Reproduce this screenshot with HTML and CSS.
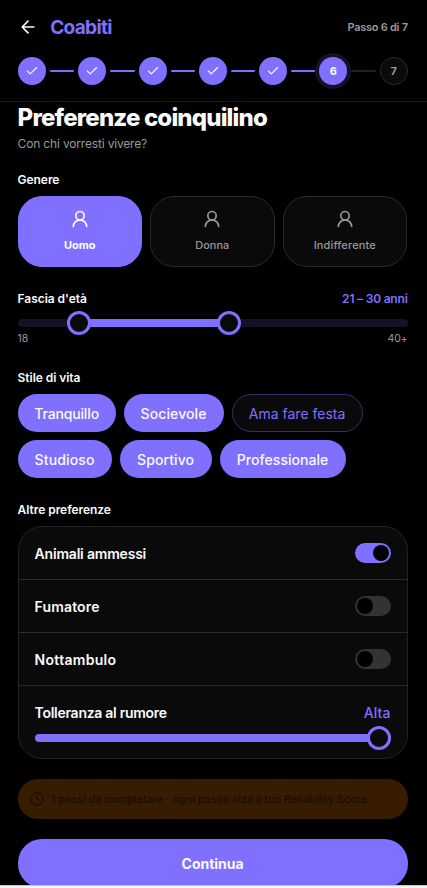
FILE: index.html
```html
<!DOCTYPE html>
<html lang="it">
<head>
<meta charset="utf-8">
<title>Coabiti</title>
<link rel="stylesheet" href="styles.css">
</head>
<body>
<svg class="defs" aria-hidden="true">
  <symbol id="check" viewBox="0 0 24 24"><path d="M20 6 9 17l-5-5"/></symbol>
  <symbol id="user" viewBox="0 0 24 24"><circle cx="12" cy="8" r="5"/><path d="M20 21a8 8 0 0 0-16 0"/></symbol>
</svg>
<div class="app">
  <header class="header">
    <div class="bar">
      <svg class="back" viewBox="0 0 24 24"><path d="m12 19-7-7 7-7M19 12H5"/></svg>
      <span class="logo">Coabiti</span>
      <span class="count">Passo 6 di 7</span>
    </div>
    <div class="steps">
      <span class="step"><svg><use href="#check"/></svg></span><i class="line"></i>
      <span class="step"><svg><use href="#check"/></svg></span><i class="line"></i>
      <span class="step"><svg><use href="#check"/></svg></span><i class="line"></i>
      <span class="step"><svg><use href="#check"/></svg></span><i class="line"></i>
      <span class="step"><svg><use href="#check"/></svg></span><i class="line"></i>
      <span class="step current">6</span><i class="line next"></i>
      <span class="step todo">7</span>
    </div>
  </header>
  <main class="content">
    <h1 class="title">Preferenze coinquilino</h1>
    <p class="subtitle">Con chi vorresti vivere?</p>

    <h2 class="label gender-label">Genere</h2>
    <div class="genders">
      <div class="gender on"><svg><use href="#user"/></svg><span>Uomo</span></div>
      <div class="gender"><svg><use href="#user"/></svg><span>Donna</span></div>
      <div class="gender"><svg><use href="#user"/></svg><span class="wide">Indifferente</span></div>
    </div>

    <div class="row age-head"><h2 class="label">Fascia d'età</h2><span class="age-value">21 – 30 anni</span></div>
    <div class="slider age"><i class="fill"></i><i class="thumb low"></i><i class="thumb high"></i></div>
    <div class="row scale"><span>18</span><span>40+</span></div>

    <h2 class="label style-label">Stile di vita</h2>
    <div class="chips">
      <span class="chip c1">Tranquillo</span>
      <span class="chip c2">Socievole</span>
      <span class="chip c3 off">Ama fare festa</span>
      <span class="chip c4">Studioso</span>
      <span class="chip c5">Sportivo</span>
      <span class="chip c6">Professionale</span>
    </div>

    <h2 class="label other-label">Altre preferenze</h2>
    <div class="card">
      <div class="row pref"><span class="animals">Animali ammessi</span><i class="toggle on"></i></div>
      <div class="row pref"><span class="smoker">Fumatore</span><i class="toggle"></i></div>
      <div class="row pref"><span class="night">Nottambulo</span><i class="toggle"></i></div>
      <div class="noise">
        <div class="row noise-head"><span class="noise-label">Tolleranza al rumore</span><span class="noise-value">Alta</span></div>
        <div class="slider full"><i class="fill"></i><i class="thumb end"></i></div>
      </div>
    </div>

    <div class="banner">
      <svg viewBox="0 0 24 24"><circle cx="12" cy="12" r="10.500"/><path d="M12 6v6l4 2"/></svg>
      <span>1 passi da completare · ogni passo alza il tuo Reliability Score</span>
    </div>
    <div class="button"><span>Continua</span></div>
  </main>
</div>
</body>
</html>
```
FILE: styles.css
```css
* { box-sizing: border-box; }
body {
  margin: 0;
  height: 888px;
  overflow: hidden;
  background: #f4f4f4;
  font-family: Inter, "Open Sans", sans-serif;
  color: #fafafa;
}
h1, h2, p { margin: 0; }
svg { fill: none; stroke: currentColor; stroke-width: 2; stroke-linecap: round; stroke-linejoin: round; flex: none; }
span { white-space: nowrap; }
.defs { display: none; }
.app { height: 886px; overflow: hidden; background: #000; border-bottom: 1px solid #c4c4c4; }

.header { height: 102px; padding: 14px 19.25px 0 17.95px; border-bottom: 1px solid #1a1a1a; }
.bar { display: flex; align-items: center; height: 26px; margin-bottom: 17px; }
.back { width: 20px; height: 20px; }
.logo { margin-left: 12.2px; font-size: 19px; font-weight: 700; letter-spacing: -0.65px; color: #8070ff; }
.count { margin-left: auto; font-size: 11px; font-weight: 600; letter-spacing: -0.27px; color: #999; }
.steps { display: flex; align-items: center; }
.step {
  display: flex; align-items: center; justify-content: center;
  width: 28px; height: 28px; flex: none; border-radius: 50%;
  background: #8070ff; font-size: 11px; font-weight: 700;
}
.step svg { width: 14px; height: 14px; }
.current { box-shadow: 0 0 0 4px #151226; }
.todo { background: #0a0a0a; border: 1px solid #2a2a2a; color: #999; }
.line { flex: 1; height: 2px; margin: 0 4px; border-radius: 1px; background: #8070ff; }
.next { background: #222; }

.content { padding: 0 19.4px 0 17.6px; }
.title { height: 31px; font-size: 24px; line-height: 31px; font-weight: 800; letter-spacing: -0.83px; white-space: nowrap; }
.subtitle { height: 21px; line-height: 21px; font-size: 12px; letter-spacing: -0.17px; color: #999; }
.label { font-size: 12px; line-height: 20px; font-weight: 600; letter-spacing: -0.05px; white-space: nowrap; }
.gender-label { margin: 16px 0 6px; }
.row { display: flex; align-items: center; justify-content: space-between; }

.genders { display: grid; grid-template-columns: repeat(3, 1fr); gap: 8px; margin-right: 0.6px; }
.gender {
  display: flex; flex-direction: column; align-items: center;
  height: 71px; padding-top: 12px; border: 1px solid #2a2a2a; border-radius: 24px;
  background: #0a0a0a; color: #999; font-size: 11px; font-weight: 500;
}
.gender svg { width: 20px; height: 20px; }
.gender span { margin-top: 8px; line-height: 16px; }
.gender .wide { letter-spacing: 0.15px; }
.gender.on { background: #8070ff; border-color: #8070ff; color: #fff; font-weight: 700; }

.age-head { height: 20px; margin-top: 22px; }
.age-value { font-size: 12px; line-height: 20px; margin-top: -1px; font-weight: 600; letter-spacing: -0.2px; color: #8070ff; }
.slider { position: relative; height: 8px; border-radius: 4px; background: #151226; }
.age { margin-top: 10px; }
.fill { position: absolute; top: 0; bottom: 0; background: #8070ff; }
.age .fill { left: 61px; right: 179px; }
.thumb { position: absolute; top: -8px; width: 24px; height: 24px; border: 3px solid #8070ff; border-radius: 50%; background: #0a0a0a; }
.low { left: 49px; }
.high { left: 199px; }
.full .fill { left: 0; right: 0; border-radius: 4px; }
.end { right: 0; }
.scale { height: 14px; margin-top: 4px; font-size: 10.5px; letter-spacing: -0.1px; color: #999; }

.style-label { margin: 23px 0 6px; }
.chips { display: flex; flex-wrap: wrap; gap: 8px; }
.chip {
  display: flex; align-items: center; justify-content: center;
  height: 38px; border-radius: 19px; background: #8070ff; font-size: 14px; font-weight: 500;
}
.chip.off { background: #0a0a0a; border: 1px solid #362f68; color: #8070ff; font-weight: 400; }
.c1 { width: 98px; letter-spacing: -0.15px; }
.c2 { width: 100px; letter-spacing: 0.1px; }
.c3 { width: 131px; }
.c4 { width: 94px; letter-spacing: 0.15px; }
.c5 { width: 92px; letter-spacing: 0.1px; }
.c6 { width: 126px; letter-spacing: 0.05px; }

.other-label { margin: 22px 0 6px; }
.card { height: 233px; border: 1px solid #222; border-radius: 24px; background: #0a0a0a; font-size: 14px; font-weight: 600; }
.pref { height: 53px; padding: 0 16px; border-bottom: 1px solid #2a2a2a; }
.animals { letter-spacing: -0.2px; }
.smoker { letter-spacing: 0.15px; }
.night { letter-spacing: 0.3px; }
.noise-label { letter-spacing: -0.28px; }
.toggle { width: 36px; height: 20px; padding: 2px; border-radius: 10px; background: #333; }
.toggle::before { content: ""; display: block; width: 16px; height: 16px; border-radius: 50%; background: #000; }
.toggle.on { background: #8070ff; }
.toggle.on::before { margin-left: auto; }
.noise { padding: 16px 16px 0; }
.noise-head { height: 21px; margin-bottom: 11px; }
.noise-value { color: #8070ff; font-weight: 500; letter-spacing: 0.1px; }

.banner {
  display: flex; align-items: center; gap: 7px; height: 40px; margin-top: 20px; padding-left: 12.4px;
  border-radius: 20px; background: #371c00; color: #190d00; font-size: 11px; font-weight: 500; letter-spacing: -0.06px;
}
.banner svg { width: 14px; height: 14px; }
.button {
  display: flex; align-items: center; justify-content: center;
  height: 49px; margin-top: 20px; border-radius: 24px; background: #8070ff; font-size: 14px; font-weight: 700;
}
```
